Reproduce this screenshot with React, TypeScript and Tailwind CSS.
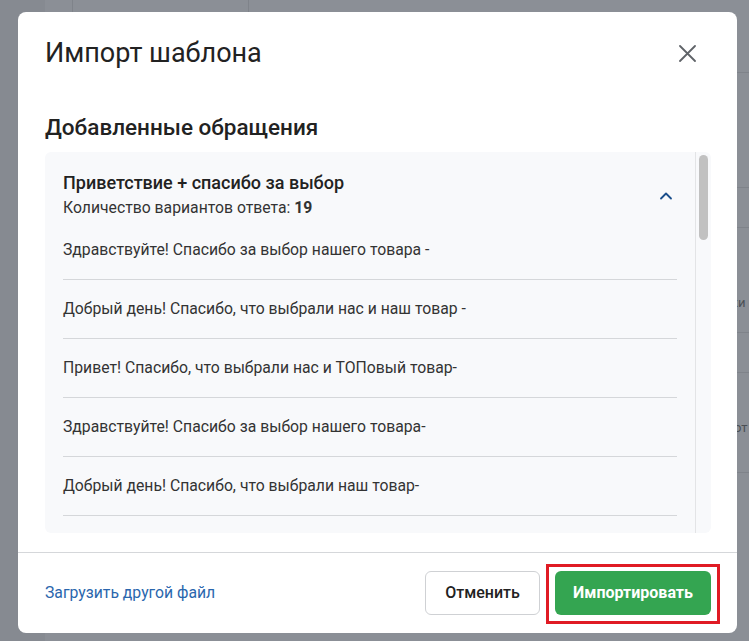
import { ChevronUp } from 'lucide-react'

const ANSWERS = [
  'Здравствуйте! Спасибо за выбор нашего товара -',
  'Добрый день! Спасибо, что выбрали нас и наш товар -',
  'Привет! Спасибо, что выбрали нас и ТОПовый товар-',
  'Здравствуйте! Спасибо за выбор нашего товара-',
  'Добрый день! Спасибо, что выбрали наш товар-',
  'Привет! Спасибо, что выбрали нас-',
  'Здравствуйте! Благодарим за выбор-',
]

function Backdrop() {
  return (
    <div className="absolute inset-0 flex bg-[#8b8f96]">
      <div className="w-[45px] bg-[#868a91]" />
      <div className="flex-1 flex flex-col">
        <div className="h-[12px] flex">
          <div className="w-[28px] border-r border-[#7f838a]" />
          <div className="w-[176px] border-r border-[#7f838a]" />
        </div>
        <div className="flex-1 flex justify-end">
          <div className="w-[12px] flex flex-col pt-[60px] text-[13px] text-[#4b4f55]">
            <div className="h-[115px] border-t border-[#7f838a]" />
            <div className="h-[40px] border-t border-[#7f838a]" />
            <div className="h-[105px] border-t border-[#7f838a] flex items-end overflow-hidden">
              <span className="-ml-[6px] pb-[20px]">ки</span>
            </div>
            <div className="h-[40px] border-t border-[#7f838a]" />
            <div className="h-[100px] border-t border-[#7f838a] overflow-hidden flex items-end">
              <span className="-ml-[3px] pb-[35px]">от</span>
            </div>
            <div className="border-t border-[#7f838a]" />
          </div>
        </div>
      </div>
    </div>
  )
}

export default function App() {
  return (
    <div className="relative w-[749px] h-[641px] overflow-hidden" style={{ fontFamily: 'Roboto, "Liberation Sans", sans-serif' }}>
      <Backdrop />

      <div className="absolute left-[18px] top-[12px] w-[719px] h-[621px] bg-white rounded-lg flex flex-col">
        <div className="flex items-center justify-between pl-[27px] pr-[41px] pt-[25px]">
          <h2 className="text-[27px] leading-8 font-normal text-[#222]">Импорт шаблона</h2>
          <svg width="17" height="17" viewBox="0 0 17 17" className="text-[#5f6368]">
            <path d="M1 1L16 16M16 1L1 16" stroke="currentColor" strokeWidth="1.8" strokeLinecap="round" />
          </svg>
        </div>

        <h3 className="px-[27px] mt-[44px] text-[22.5px] leading-7 font-medium text-[#222]">Добавленные обращения</h3>

        <div className="mx-[27px] mr-[26px] mt-[11px] h-[381px] bg-[#f8f9fb] rounded-md flex overflow-hidden">
          <div className="flex-1 pl-[18px] pr-[18px] pt-[19px] overflow-hidden">
            <div className="flex items-start justify-between">
              <div>
                <p className="text-[18px] leading-6 font-medium text-[#222]">Приветствие + спасибо за выбор</p>
                <p className="mt-[3px] text-[15.75px] leading-5 text-[#333]">
                  Количество вариантов ответа: <span className="font-bold">19</span>
                </p>
              </div>
              <ChevronUp size={20} strokeWidth={2.2} className="mt-[15px] mr-[1px] text-[#1b4f8c]" />
            </div>
            <div className="mt-[3px]">
              {ANSWERS.map((a, i) => (
                <div key={i} className="h-[59px] flex items-center border-b border-[#d5d7da] text-[15.75px] text-[#333]">
                  {a}
                </div>
              ))}
            </div>
          </div>
          <div className="w-[16px] border-l border-[#e3e4e6] pt-[3px] flex justify-center">
            <div className="w-[9px] h-[85px] rounded-full bg-[#c1c1c1]" />
          </div>
        </div>

        <div className="mt-[19px] border-t border-[#d5d7da] flex-1 flex items-center justify-between pl-[27px] pr-[26px]">
          <a className="text-[15.75px] text-[#2a66ad]">Загрузить другой файл</a>
          <div className="flex gap-[15px]">
            <button className="w-[115px] h-[44px] rounded-md border border-[#cfd1d4] bg-white text-[16px] font-medium text-[#222]">
              Отменить
            </button>
            <div className="relative">
              <button className="w-[156px] h-[44px] rounded-md bg-[#34a551] text-[16px] font-bold text-white">
                Импортировать
              </button>
              <span className="absolute -left-[9px] -right-[9px] -top-[7px] -bottom-[9px] border-[3px] border-[#e01b24]" />
            </div>
          </div>
        </div>
      </div>
    </div>
  )
}
